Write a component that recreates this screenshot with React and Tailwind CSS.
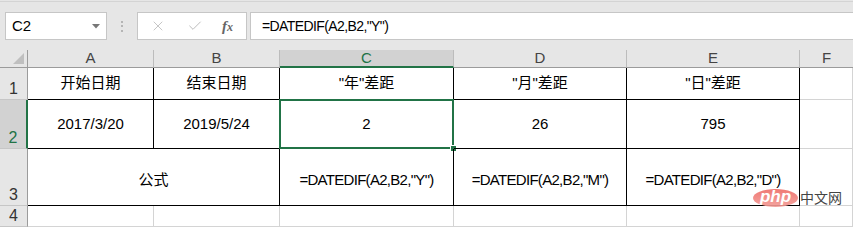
import React from 'react'
import { X, Check } from 'lucide-react'

function Toolbar() {
  return (
    <div className="h-[50px] bg-[#e6e6e6] pt-px">
      <div className="flex items-start border-t border-[#d4d4d4] pt-[10px]">
        {/* Name box */}
        <div className="ml-[5px] w-[102px] h-[28px] bg-white border border-[#c6c6c6] flex items-center justify-between pl-[6px] pr-[6px]">
          <span className="text-[15px] text-black">C2</span>
          <svg width="8" height="5" viewBox="0 0 8 5">
            <polygon points="0,0 8,0 4,4.5" fill="#777" />
          </svg>
        </div>

        {/* Splitter dots */}
        <div className="w-[30px] h-[28px] flex flex-col items-center justify-center gap-[2.5px]">
          <span className="w-[2px] h-[2px] bg-[#b5b5b5]" />
          <span className="w-[2px] h-[2px] bg-[#b5b5b5]" />
          <span className="w-[2px] h-[2px] bg-[#b5b5b5]" />
        </div>

        {/* Cancel / enter / fx */}
        <div className="w-[110px] h-[28px] bg-white border border-[#c6c6c6] flex items-center pl-[12px]">
          <X size={16} strokeWidth={1.3} className="text-[#bdbdbd]" />
          <Check size={16} strokeWidth={1.5} className="ml-[21px] text-[#bdbdbd]" />
          <span className="ml-[19px] italic font-bold text-[15px] text-[#666] font-['Liberation_Serif',serif]">
            f<span className="text-[12px]">x</span>
          </span>
        </div>

        {/* Formula input */}
        <div className="ml-[3px] flex-1 h-[28px] bg-white border-y border-l border-[#c6c6c6] flex items-center pl-[11px]">
          <span className="text-[14px] tracking-[-0.6px] text-black">=DATEDIF(A2,B2,"Y")</span>
        </div>
      </div>
    </div>
  )
}

function ColHead({ label, active, last }) {
  return (
    <div
      className={
        'flex items-center justify-center text-[15px] ' +
        (active
          ? 'bg-[#d2d2d2] text-[#217346] border-b-2 border-b-[#217346] border-r border-r-[#bcbcbc]'
          : 'bg-[#e6e6e6] text-[#444] border-b border-b-[#9b9b9b] ' + (last ? '' : 'border-r border-r-[#bcbcbc]'))
      }
    >
      {label}
    </div>
  )
}

function RowHead({ label, active }) {
  return (
    <div
      className={
        'flex items-end justify-center text-[16px] leading-[18px] pb-px ' +
        (active
          ? 'bg-[#d2d2d2] text-[#217346] border-r-2 border-r-[#217346] border-b border-b-[#c6c6c6]'
          : 'bg-[#e6e6e6] text-[#333] border-r border-r-[#9b9b9b] border-b border-b-[#c6c6c6]')
      }
    >
      {label}
    </div>
  )
}

function Cell({ children, boxed, formula, span, className = '' }) {
  return (
    <div
      className={
        'relative flex items-center justify-center text-[15px] text-black border-r border-b ' +
        (boxed ? 'border-black ' : 'border-[#d4d4d4] ') +
        (formula ? 'tracking-[-0.7px] pt-[6px] ' : '') +
        (span ? 'col-span-2 pt-[6px] ' : '') +
        className
      }
    >
      {children}
    </div>
  )
}

function Sheet() {
  return (
    <div className="grid grid-cols-[28px_126px_126px_174px_173px_173px_1fr] grid-rows-[18px_32px_49px_57px_21px]">
      {/* header row */}
      <div className="relative bg-[#e6e6e6] border-r border-b border-[#9b9b9b]">
        <svg className="absolute right-[3px] bottom-[3px]" width="11" height="11" viewBox="0 0 11 11">
          <polygon points="11,0 11,11 0,11" fill="#bfbfbf" />
        </svg>
      </div>
      <ColHead label="A" />
      <ColHead label="B" />
      <ColHead label="C" active />
      <ColHead label="D" />
      <ColHead label="E" />
      <ColHead label="F" last />

      {/* row 1 */}
      <RowHead label="1" />
      <Cell boxed>开始日期</Cell>
      <Cell boxed>结束日期</Cell>
      <Cell boxed>"年"差距</Cell>
      <Cell boxed>"月"差距</Cell>
      <Cell boxed>"日"差距</Cell>
      <Cell />

      {/* row 2 */}
      <RowHead label="2" active />
      <Cell boxed>2017/3/20</Cell>
      <Cell boxed>2019/5/24</Cell>
      <Cell boxed>
        2
        <div className="absolute -left-px -top-px -right-px -bottom-px border-2 border-[#217346]" />
        <div className="absolute -right-[4px] -bottom-[4px] w-[7px] h-[7px] bg-[#217346] border border-white" />
      </Cell>
      <Cell boxed>26</Cell>
      <Cell boxed>795</Cell>
      <Cell />

      {/* row 3 */}
      <RowHead label="3" />
      <Cell boxed span>公式</Cell>
      <Cell boxed formula>=DATEDIF(A2,B2,"Y")</Cell>
      <Cell boxed formula>=DATEDIF(A2,B2,"M")</Cell>
      <Cell boxed formula>=DATEDIF(A2,B2,"D")</Cell>
      <Cell />

      {/* row 4 */}
      <RowHead label="4" />
      <Cell />
      <Cell />
      <Cell />
      <Cell />
      <Cell />
      <Cell />
    </div>
  )
}

export default function App() {
  return (
    <div className="relative w-[853px] h-[227px] overflow-hidden bg-white font-['Liberation_Sans','Noto_Sans_CJK_SC',sans-serif]">
      <Toolbar />
      <Sheet />

      {/* watermark */}
      <div className="absolute left-[753px] top-[187px] flex items-center">
        <div className="w-[45px] h-[18px] rounded-[50%] bg-gradient-to-b from-[#ee6b66] to-[#f29a95] opacity-90 flex items-center justify-center">
          <span className="text-white text-[17px] leading-none italic font-bold pb-[2px] font-['Liberation_Sans',sans-serif]">php</span>
        </div>
        <span className="ml-[2px] text-[14px] text-[#444] font-['Noto_Sans_CJK_SC',sans-serif]">中文网</span>
      </div>
    </div>
  )
}
